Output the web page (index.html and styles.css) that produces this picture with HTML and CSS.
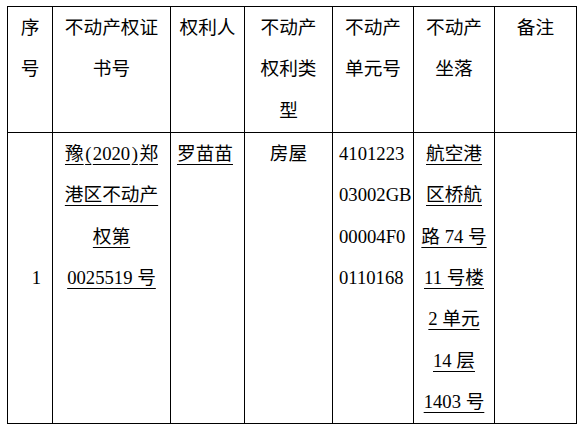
FILE: index.html
```html
<!DOCTYPE html>
<html lang="zh-CN">
<head>
<meta charset="utf-8">
<title>不动产</title>
<link rel="stylesheet" href="styles.css">
</head>
<body>
<table class="grid">
  <colgroup>
    <col class="c1"><col class="c2"><col class="c3"><col class="c4"><col class="c5"><col class="c6"><col class="c7">
  </colgroup>
  <tr class="head">
    <td>序<br>号</td>
    <td>不动产权证<br>书号</td>
    <td>权利人</td>
    <td>不动产<br>权利类<br>型</td>
    <td>不动产<br>单元号</td>
    <td>不动产<br>坐落</td>
    <td>备注</td>
  </tr>
  <tr class="body">
    <td class="idx">1</td>
    <td class="center"><span class="u">豫<span class="p">(</span>2020<span class="p">)</span>郑</span><br><span class="u">港区不动产</span><br><span class="u">权第</span><br><span class="u">0025519 号</span></td>
    <td class="left"><span class="u">罗苗苗</span></td>
    <td class="center">房屋</td>
    <td class="left">4101223<br>03002GB<br>00004F0<br>0110168</td>
    <td class="center"><span class="u">航空港</span><br><span class="u">区桥航</span><br><span class="u">路 74 号</span><br><span class="u">11 号楼</span><br><span class="u">2 单元</span><br><span class="u">14 层</span><br><span class="u">1403 号</span></td>
    <td></td>
  </tr>
</table>
</body>
</html>
```

FILE: styles.css
```css
html, body {
  margin: 0;
  padding: 0;
  background: #ffffff;
}
body {
  padding: 6px 0 0 7px;
  font-family: "Liberation Serif", "Noto Sans CJK SC", serif;
  font-size: 18.67px;
  color: #000000;
}
.grid {
  border-collapse: collapse;
  table-layout: fixed;
  width: 569px;
}
.c1 { width: 45px; }
.c2 { width: 118px; }
.c3 { width: 74px; }
.c4 { width: 88px; }
.c5 { width: 81px; }
.c6 { width: 81px; }
.c7 { width: 82px; }
.grid td {
  border: 1px solid #000000;
  padding: 0 0 1px 0;
  line-height: 41.33px;
  vertical-align: top;
  text-align: center;
  white-space: nowrap;
}
.head td {
  text-align: center;
}
.body .idx {
  vertical-align: middle;
  text-align: right;
  padding-right: 11px;
}
.body .left {
  text-align: left;
  padding-left: 6px;
}
.body .center {
  text-align: center;
}
.p {
  padding: 0 1.5px;
}
.u {
  text-decoration: underline;
  text-decoration-thickness: 1px;
  text-underline-offset: 4px;
}
```
